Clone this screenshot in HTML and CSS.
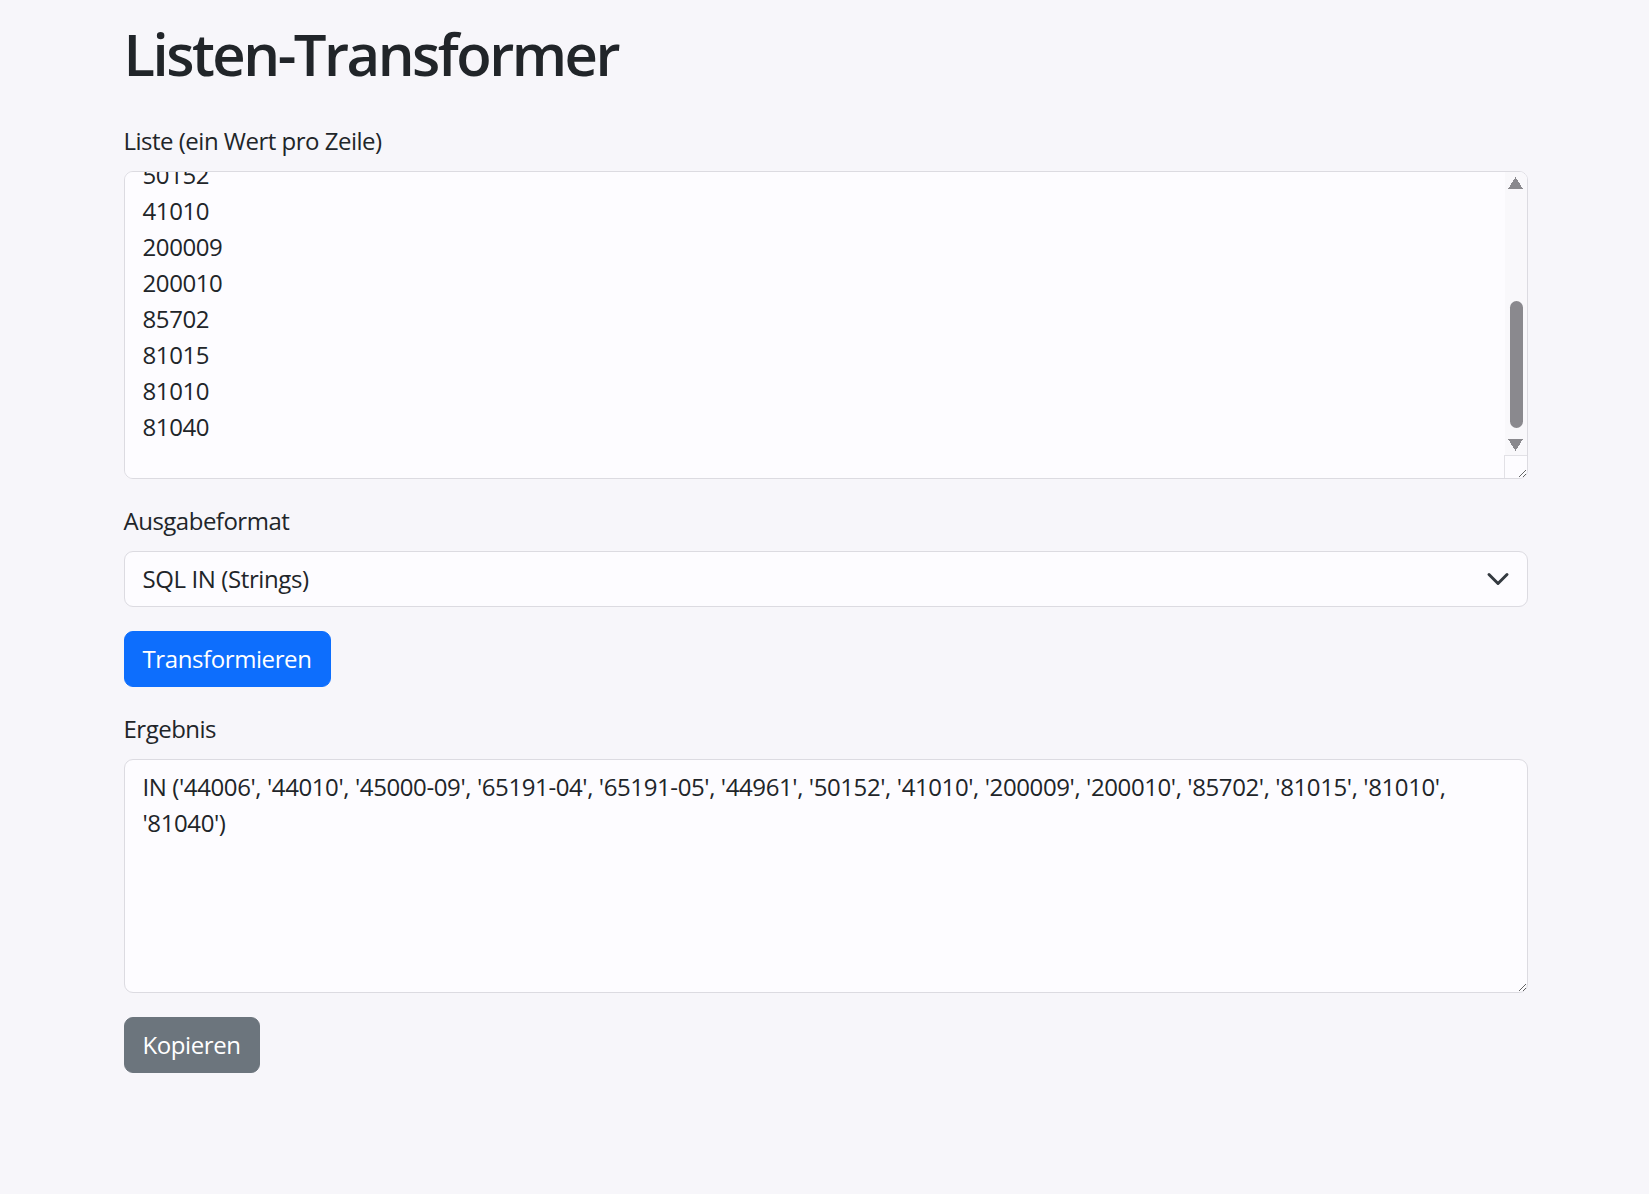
FILE: index.html
```html
<!DOCTYPE html>
<html lang="de">
<head>
<meta charset="UTF-8" />
<meta name="viewport" content="width=device-width, initial-scale=1.0"/>
<title>Listen-Transformer</title>
<link rel="stylesheet" href="styles.css">
</head>
<body>
<div class="container">
    <h1 class="page-title">Listen-Transformer</h1>

    <div class="field">
        <label class="field-label" for="input-list">Liste (ein Wert pro Zeile)</label>
        <div class="list-wrap">
            <textarea id="input-list" class="form-control list-input">44006
44010
45000-09
65191-04
65191-05
44961
50152
41010
200009
200010
85702
81015
81010
81040
</textarea>
            <div class="scrollbar" aria-hidden="true">
                <span class="scroll-arrow arrow-up"></span>
                <div class="scroll-track"><div class="scroll-thumb" id="thumb"></div></div>
                <span class="scroll-arrow arrow-down"></span>
            </div>
            <div class="scroll-corner" aria-hidden="true"></div>
        </div>
    </div>

    <div class="field">
        <label class="field-label" for="format">Ausgabeformat</label>
        <div class="select-wrap">
            <select id="format" class="form-select">
                <option value="sql-str">SQL IN (Strings)</option>
                <option value="sql-num">SQL IN (Zahlen)</option>
                <option value="csv">Kommagetrennt</option>
                <option value="json">JSON-Array</option>
            </select>
            <svg class="select-chevron" viewBox="0 0 16 16" aria-hidden="true">
                <path d="m2 5 6 6 6-6" fill="none" stroke="#343a40" stroke-width="2" stroke-linecap="round" stroke-linejoin="round"/>
            </svg>
        </div>
    </div>

    <button class="btn btn-primary" onclick="transform()">Transformieren</button>

    <div class="field">
        <label class="field-label" for="output">Ergebnis</label>
        <textarea id="output" class="form-control result-output" readonly>IN ('44006', '44010', '45000-09', '65191-04', '65191-05', '44961', '50152', '41010', '200009', '200010', '85702', '81015', '81010', '81040')</textarea>
    </div>

    <button class="btn btn-secondary" onclick="copyResult()">Kopieren</button>
</div>
<script>
const list = document.getElementById('input-list');
const thumb = document.getElementById('thumb');

function updateThumb() {
    const track = thumb.parentElement.clientHeight;
    const max = list.scrollHeight - list.clientHeight;
    if (max <= 0) { thumb.style.display = 'none'; return; }
    const h = Math.max(30, track * list.clientHeight / list.scrollHeight) - 4;
    thumb.style.display = '';
    thumb.style.height = h + 'px';
    thumb.style.marginTop = ((track - h) * list.scrollTop / max) + 'px';
}
function getValues() {
    return list.value
        .split('\n')
        .map(v => v.trim())
        .filter(v => v !== '');
}
function transform() {
    const values = getValues();
    const format = document.getElementById('format').value;
    let out = '';
    if (format === 'sql-str') {
        out = 'IN (' + values.map(v => "'" + v + "'").join(', ') + ')';
    } else if (format === 'sql-num') {
        out = 'IN (' + values.join(', ') + ')';
    } else if (format === 'csv') {
        out = values.join(', ');
    } else {
        out = JSON.stringify(values);
    }
    document.getElementById('output').value = out;
}
function copyResult() {
    const output = document.getElementById('output');
    output.select();
    document.execCommand('copy');
}
list.addEventListener('scroll', updateThumb);
list.addEventListener('input', updateThumb);
list.scrollTop = 240;
updateThumb();
</script>
</body>
</html>
```

FILE: styles.css
```css
body {
    margin: 0;
    background-color: #f7f6fa;
    color: #212529;
    font-family: "Open Sans", "Noto Sans", sans-serif;
    font-size: 24px;
    line-height: 36px;
    letter-spacing: -0.5px;
}
.container {
    max-width: 1440px;
    margin: 0 auto;
    padding: 18px 17px 0 19px;
    box-sizing: border-box;
}
.page-title {
    font-size: 58px;
    font-weight: 600;
    line-height: 72px;
    letter-spacing: -2.5px;
    margin: 0 0 33px;
}
.field {
    margin-bottom: 24px;
}
.field-label {
    display: block;
    margin-bottom: 12px;
}
.form-control,
.form-select {
    display: block;
    width: 100%;
    box-sizing: border-box;
    font-family: inherit;
    font-size: 24px;
    line-height: 36px;
    letter-spacing: -0.4px;
    color: #212529;
    background-color: #fdfcff;
    border: 1px solid #dcdbe1;
    border-radius: 9px;
    padding: 9px 18px;
    outline: none;
}
.list-input {
    height: 308px;
    resize: vertical;
    padding-right: 44px;
}
.result-output { height: 234px; resize: vertical; }

/* drawn scrollbar for the list field */
.list-wrap { position: relative; }
.scrollbar {
    position: absolute;
    top: 1px;
    right: 1px;
    bottom: 24px;
    width: 22px;
    display: flex;
    flex-direction: column;
    background-color: #f9f8fb;
    border-top-right-radius: 8px;
}
.scroll-arrow {
    display: block;
    height: 22px;
    flex: none;
    background-repeat: no-repeat;
    background-position: center;
    background-size: 15px 12px;
}
.arrow-up {
    background-position: center 5px;
    background-image: conic-gradient(from 148deg at 50% 0, #8a898e 0 64deg, transparent 64deg);
}
.arrow-down {
    background-position: center 6px;
    background-image: conic-gradient(from -32deg at 50% 100%, #8a898e 0 64deg, transparent 64deg);
}
.scroll-track {
    flex: 1;
    padding: 0 4px 0 5px;
}
.scroll-thumb {
    background-color: #8a898e;
    border-radius: 7px;
}
.scroll-corner {
    position: absolute;
    right: 1px;
    bottom: 1px;
    width: 22px;
    height: 22px;
    border-top: 1px solid #e2e1e6;
    border-left: 1px solid #e2e1e6;
}

.select-wrap { position: relative; }
.form-select {
    appearance: none;
    -webkit-appearance: none;
    height: 56px;
    padding: 8px 54px 8px 18px;
    cursor: pointer;
}
.select-chevron {
    position: absolute;
    right: 18px;
    top: 50%;
    width: 24px;
    height: 24px;
    margin-top: -12px;
    pointer-events: none;
}

.btn {
    display: inline-block;
    height: 56px;
    padding: 0 18px;
    font-family: inherit;
    font-size: 24px;
    line-height: 54px;
    letter-spacing: -0.4px;
    color: #fff;
    border: 1px solid transparent;
    border-radius: 9px;
    cursor: pointer;
    margin-bottom: 24px;
}
.btn-primary { background-color: #0d6efd; border-color: #0d6efd; }
.btn-secondary { background-color: #6c757d; border-color: #6c757d; }
.btn:hover { filter: brightness(0.95); }
```
